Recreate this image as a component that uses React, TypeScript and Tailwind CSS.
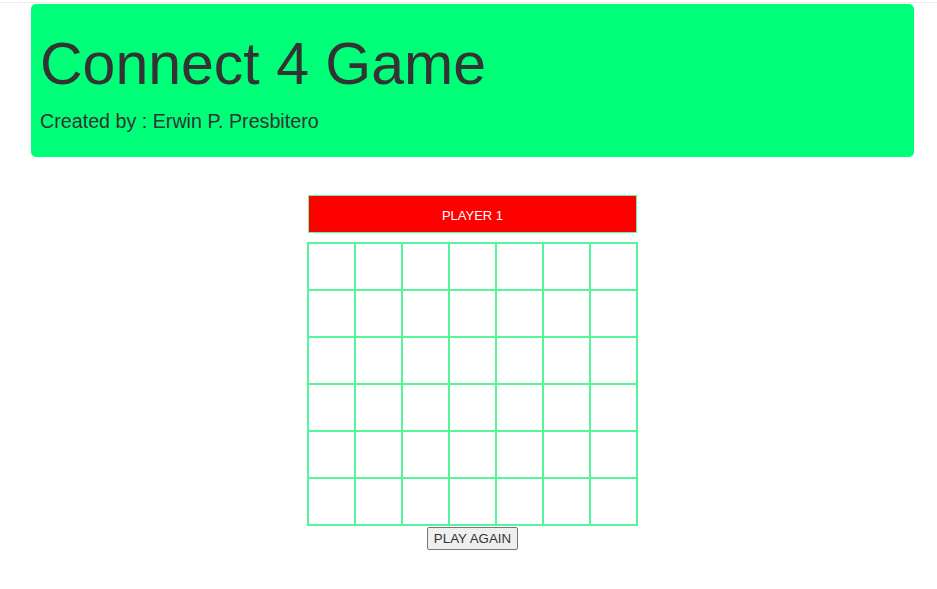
export default function App() {
  const rows = 6;
  const cols = 7;

  return (
    <div className="min-h-screen bg-white font-['Liberation_Sans',Arial,sans-serif] text-[#333]">
      <div className="h-[3px] border-b border-[#ececec]" />
      <div className="ml-[31px] w-[883px]">
        {/* Header */}
        <div className="mt-px rounded-[5px] bg-[#00ff78] pl-[9px] pt-[28px] pb-[22px]">
          <h1 className="text-[59px] leading-[1.1]">Connect 4 Game</h1>
          <p className="mt-[10px] text-[19.7px] leading-[28px]">Created by : Erwin P. Presbitero</p>
        </div>

        {/* Board */}
        <div className="mt-[38px] flex flex-col items-center">
          <div className="flex h-[38px] w-[329px] items-center justify-center border border-[#66f5a3] bg-[#ff0000] pt-[3px] text-[13px] text-white">
            PLAYER 1
          </div>
          <div className="mt-[9px] border border-[#55f59a]">
            {Array.from({ length: rows }).map((_, r) => (
              <div key={r} className="flex">
                {Array.from({ length: cols }).map((_, c) => (
                  <div key={c} className="h-[47px] w-[47px] border border-[#55f59a] bg-white" />
                ))}
              </div>
            ))}
          </div>
          <button className="mt-px rounded-[2px] border border-[#767676] bg-[#efefef] px-[6px] py-[2px] text-[13.33px] leading-[17px] text-[#333]">
            PLAY AGAIN
          </button>
        </div>
      </div>
    </div>
  );
}
